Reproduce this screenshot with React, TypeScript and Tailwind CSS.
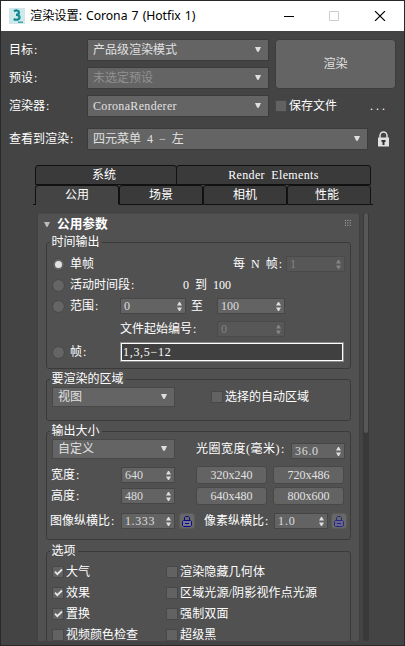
import type { ReactNode } from 'react';
import clsx from 'clsx';

interface BoxProps {
  children?: ReactNode;
  className?: string;
  disabled?: boolean;
}

function Dropdown({ children, className, disabled }: BoxProps) {
  return (
    <div
      className={clsx(
        'flex shrink-0 items-center justify-between border border-[#3b3b3b] bg-[#646464] pr-[7px] pl-[5px]',
        disabled ? 'text-[#929292]' : 'text-[#e0e0e0]',
        className,
      )}
    >
      <span>{children}</span>
      <svg width="6" height="5" viewBox="0 0 6 5" className="mb-0.5">
        <path d="M0 0h6L3.8 4.8H2.2z" fill="#dedede" />
      </svg>
    </div>
  );
}

function Spinner({ children, className, disabled }: BoxProps) {
  return (
    <div
      className={clsx(
        'flex h-4 shrink-0 items-center justify-between border pr-[3px] pl-[3px]',
        disabled ? 'border-[#4a4a4a] bg-[#575757] text-[#858585]' : 'border-[#464646] bg-[#636363] text-[#dedede]',
        className,
      )}
    >
      <span className="-mt-px">{children}</span>
      <svg width="5" height="9" viewBox="0 0 5 9" fill="currentColor">
        <path d="M2 0h1l2 3.5H0z" />
        <path d="M0 5.5h5L3 9H2z" />
      </svg>
    </div>
  );
}

function Check({ children, className, checked }: BoxProps & { checked?: boolean }) {
  return (
    <label className={clsx('flex shrink-0 items-center gap-0.5', className)}>
      <span className="flex size-3 items-center justify-center border border-[#484848] bg-[#626262]">
        {checked && (
          <svg width="9" height="8" viewBox="0 0 9 8" fill="none" stroke="#e6e6e6" strokeWidth="1.8">
            <path d="M1 3.7l2.3 2.5L8 1.5" />
          </svg>
        )}
      </span>
      <span>{children}</span>
    </label>
  );
}

function Radio({ on }: { on?: boolean }) {
  return (
    <span className="mr-1.5 flex size-[11px] shrink-0 items-center justify-center rounded-full bg-[#656565] outline outline-[#4b4b4b]">
      {on && <span className="size-[7px] rounded-full bg-[#e2e2e2]" />}
    </span>
  );
}

function Label({ children, className }: BoxProps) {
  return (
    <span className={clsx('shrink-0', className)}>
      {children}
      <span className="pl-px">:</span>
    </span>
  );
}

function Group({ title, children, className }: BoxProps & { title: string }) {
  return (
    <fieldset className={clsx('w-[305px] rounded-[3px] border border-[#3a3a3a]', className)}>
      <legend className="ml-[3px] pr-0.5 pl-[1.5px] leading-3">{title}</legend>
      {children}
    </fieldset>
  );
}

function PresetButton({ children }: BoxProps) {
  return (
    <button className="h-[18px] w-[71px] rounded-[3px] border border-[#484848] bg-[#636363] pb-px leading-none text-[#e2e2e2]">
      {children}
    </button>
  );
}

function LockButton({ dim }: { dim?: boolean }) {
  return (
    <span className="flex size-4 shrink-0 items-center justify-center rounded-[3px] border border-[#5b5b5b] bg-[#686868]">
      <svg width="10" height="12" viewBox="0 0 10 12" fill="none" stroke={dim ? '#29297f' : '#08088a'}>
        <path d="M2.5 6V2.5l1-1h3l1 1V6" />
        <path d="M1.5 5.5h7l1 1v4l-1 1h-7l-1-1v-4z" fill={dim ? '#66668c' : '#77778a'} />
        <path d="M3 8.5h4" />
      </svg>
    </span>
  );
}

const tab = 'flex items-center justify-center rounded-t-[3px] border border-[#111]';

const options = [
  ['大气', true, '渲染隐藏几何体'],
  ['效果', true, '区域光源/阴影视作点光源'],
  ['置换', true, '强制双面'],
  ['视频颜色检查', false, '超级黑'],
] as const;

export default function App() {
  return (
    <div className="h-[646px] w-[405px] overflow-hidden border border-[#292929] bg-[#444] font-['Liberation_Serif','Noto_Sans_CJK_SC',serif] text-[12px] leading-3 whitespace-nowrap text-white [word-spacing:3px]">
      {/* Title bar */}
      <header className="flex h-[30px] items-center bg-white pl-2 text-black">
        <svg width="16" height="16" viewBox="0 0 16 16">
          <path d="M0 0h16v16H0z" fill="#cfe8ea" />
          <path
            d="M5 3.2C7 2 10 2.2 10 4.6c0 1.6-1.3 2.2-3 2.2 2 0 3.5.7 3.5 2.5 0 2.600-3.500 3-5.800 1.700"
            fill="none"
            stroke="#128a92"
            strokeWidth="2.2"
          />
          <path d="M9 14.200h5" stroke="#2b9ba2" strokeWidth="1.300" />
        </svg>
        <h1 className="ml-[5px] font-['Noto_Sans','Noto_Sans_CJK_SC',sans-serif] text-[12.2px] tracking-[-0.03px] [word-spacing:1px]">
          渲染设置: Corona 7 (Hotfix 1)
        </h1>
        <svg width="102" height="10" viewBox="0 0 102 10" fill="none" className="mr-[18px] ml-auto">
          <path d="M0 5.5h10" stroke="#000" />
          <path d="M45.5 .5h9v9h-9z" stroke="#ccc" />
          <path d="M91 0l10 10M101 0L91 10" stroke="#000" strokeWidth="1.1" />
        </svg>
      </header>

      {/* Target, preset and renderer */}
      <section className="flex pt-2 pl-2">
        <div className="flex flex-col gap-1.5">
          <div className="flex items-center">
            <Label className="w-[78px]">目标</Label>
            <Dropdown className="h-[22px] w-[182px]">产品级渲染模式</Dropdown>
          </div>
          <div className="flex items-center">
            <Label className="w-[78px]">预设</Label>
            <Dropdown className="h-[22px] w-[182px]" disabled>未选定预设</Dropdown>
          </div>
          <div className="flex items-center">
            <Label className="w-[78px]">渲染器</Label>
            <Dropdown className="h-[22px] w-[182px]">
              <span className="tracking-[0.33px]">CoronaRenderer</span>
            </Dropdown>
          </div>
        </div>
        <div className="ml-1.5 w-[121px]">
          <button className="h-[50px] w-full rounded-[4px] border border-[#3d3d3d] bg-[#646464] text-[#e0e0e0]">
            渲染
          </button>
          <div className="mt-[11px] flex items-center justify-between pr-2">
            <Check>保存文件</Check>
            <span className="tracking-[3px]">...</span>
          </div>
        </div>
      </section>
      <div className="mt-[11px] flex items-center pl-2">
        <Label className="w-[78px]">查看到渲染</Label>
        <Dropdown className="h-[22px] w-[281px]">四元菜单 4 − 左</Dropdown>
        <svg width="13" height="16" viewBox="0 0 13 16" className="ml-[9px]">
          <path d="M3 7V4.5a3.5 3.5 0 017 0V7" fill="none" stroke="#e0e0e0" strokeWidth="1.5" />
          <path d="M1 6.5h11v9H1z" fill="#e0e0e0" />
          <path d="M4.500 9h4v2H7.500v3h-2v-3h-1z" fill="#333" />
        </svg>
      </div>

      {/* Tabs */}
      <nav className="mt-[15px] ml-[34px] w-[336px]">
        <div className="flex h-5">
          <div className={clsx(tab, 'w-[142px] bg-[#3a3a3a] pr-1')}>系统</div>
          <div className={clsx(tab, '-ml-px w-[195px] bg-[#3a3a3a]')}>
            <span className="tracking-[0.35px]">Render Elements</span>
          </div>
        </div>
        <div className="-mx-0.5 flex h-5">
          <div className="w-[3px] border-b border-[#111]" />
          <div className={clsx(tab, '-ml-px w-[84px] border-b-transparent')}>公用</div>
          <div className={clsx(tab, 'w-[84px] bg-[#3a3a3a]')}>场景</div>
          <div className={clsx(tab, 'w-[84px] bg-[#3a3a3a]')}>相机</div>
          <div className={clsx(tab, 'w-[84px] bg-[#3a3a3a] pr-1')}>性能</div>
          <div className="w-0.5 border-b border-[#111]" />
        </div>
      </nav>

      {/* Rollout with its scroll bar */}
      <main className="mt-2 ml-9 flex h-[428px] overflow-hidden">
        <div className="w-[323px] rounded-t-[3px] border-x border-t border-[#404040] border-t-[#484848] bg-[#515151] pl-2">
          <div className="flex h-[22px] items-center pr-1.5">
            <svg width="6" height="5" viewBox="0 0 6 5" className="-mt-0.5 -ml-0.5">
              <path d="M0 0h6L3.5 5h-1z" fill="#bbb" />
            </svg>
            <h2 className="-mt-0.5 ml-[7px] text-[12.7px] font-bold">公用参数</h2>
            <svg width="6" height="6" viewBox="0 0 6 6" className="mr-0.5 mb-1 ml-auto">
              <path d="M.5 0v6M2.8 0v6M5.2 0v6" stroke="#b0b0b0" strokeDasharray="1 1.4" />
            </svg>
          </div>

          <Group title="时间输出" className="h-[133px]">
            <div className="mt-2 flex h-4 items-center pl-1.5">
              <Radio on />
              <span>单帧</span>
              <span className="ml-auto">每 N <Label>帧</Label></span>
              <Spinner className="mr-[5px] ml-1 w-[59px]" disabled>1</Spinner>
            </div>
            <div className="mt-[5px] flex h-4 items-center pl-1.5">
              <Radio />
              <Label className="w-[113px]">活动时间段</Label>
              <span>0 到 100</span>
            </div>
            <div className="mt-[5px] flex h-4 items-center pl-1.5">
              <Radio />
              <Label className="w-[50px]">范围</Label>
              <Spinner className="w-[66px]">0</Spinner>
              <span className="ml-[5px] w-[26px]">至</span>
              <Spinner className="w-[68px]">100</Spinner>
            </div>
            <div className="mt-[7px] flex h-4 items-center pl-[73px]">
              <Label className="w-[97px]">文件起始编号</Label>
              <Spinner className="w-[68px]" disabled>0</Spinner>
            </div>
            <div className="mt-[5px] flex h-5 items-center pl-1.5">
              <Radio />
              <Label className="w-[51px]">帧</Label>
              <div className="h-[18px] w-[222px] border border-white bg-[#404040] pt-0.5 pl-px outline outline-[#8a8a8a]">
                <span className="tracking-[0.7px]">1,3,5−12</span>
              </div>
            </div>
          </Group>

          <Group title="要渲染的区域" className="mt-1 h-12">
            <div className="mt-0.5 flex items-center pl-[5px]">
              <Dropdown className="h-5 w-[123px] border-[#484848] pl-1">视图</Dropdown>
              <Check className="ml-9">选择的自动区域</Check>
            </div>
          </Group>

          <Group title="输出大小" className="mt-1 h-[115px]">
            <div className="mt-0.5 flex items-center pl-[5px]">
              <Dropdown className="h-5 w-[123px] border-[#484848] pl-1">自定义</Dropdown>
              <Label className="ml-[21px] w-[95px] tracking-[0.5px]">光圈宽度(毫米)</Label>
              <Spinner className="mt-1 w-[54px]"><span className="tracking-[0.7px]">36.0</span></Spinner>
            </div>
            <div className="mt-[7px] flex h-[18px] items-center pl-1">
              <Label className="w-[70px]">宽度</Label>
              <Spinner className="w-[54px]">640</Spinner>
              <div className="ml-[21px] flex gap-1.5">
                <PresetButton>320x240</PresetButton>
                <PresetButton>720x486</PresetButton>
              </div>
            </div>
            <div className="mt-[3px] flex h-[18px] items-center pl-1">
              <Label className="w-[70px]">高度</Label>
              <Spinner className="w-[54px]">480</Spinner>
              <div className="ml-[21px] flex gap-1.5">
                <PresetButton>640x480</PresetButton>
                <PresetButton>800x600</PresetButton>
              </div>
            </div>
            <div className="mt-2 flex h-4 items-center pl-[3px]">
              <Label className="w-[71px]">图像纵横比</Label>
              <Spinner className="mr-1 w-[54px]"><span className="tracking-[0.6px]">1.333</span></Spinner>
              <LockButton />
              <Label className="ml-[9px] w-[70px]">像素纵横比</Label>
              <Spinner className="mr-[3px] w-[54px]"><span className="tracking-[0.9px]">1.0</span></Spinner>
              <LockButton dim />
            </div>
          </Group>

          <Group title="选项" className="mt-[5px] h-[120px]">
            <div className="mt-[9px] flex flex-col gap-[9px] pl-[5px]">
              {options.map(([left, checked, right]) => (
                <div key={left} className="flex">
                  <Check className="w-[114px]" checked={checked}>{left}</Check>
                  <Check className="tracking-[0.15px]">{right}</Check>
                </div>
              ))}
            </div>
          </Group>
        </div>
        <div className="ml-[3px] w-1.5 rounded-[3px] bg-[#393939] px-px">
          <div className="h-[220px] rounded-[2px] bg-[#575757]" />
        </div>
      </main>
    </div>
  );
}
